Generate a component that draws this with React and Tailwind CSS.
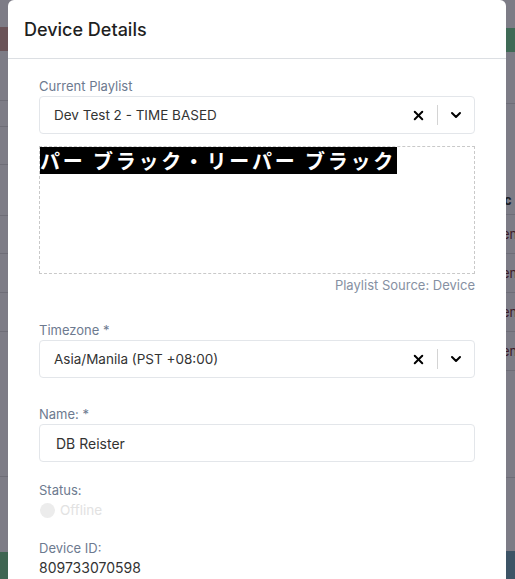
import React from 'react';
import { X, ChevronDown } from 'lucide-react';

const font = { fontFamily: 'Inter, "Noto Sans", sans-serif' };

function SelectBox({ value }) {
  return (
    <div className="flex h-[38px] items-center rounded border border-[#e3e6ea] bg-white pl-[14px] pr-[4px]">
      <span className="flex-1 text-[13.5px] text-[#333]">{value}</span>
      <X size={15} strokeWidth={3.2} className="mr-[11px] text-black" />
      <span className="h-[20px] w-px bg-[#d4d4d4]" />
      <ChevronDown size={16} strokeWidth={3} className="ml-[10px] mr-[6px] text-black" />
    </div>
  );
}

function Label({ children, className = '' }) {
  return (
    <div className={`h-[20px] text-[13px] leading-[20px] text-[#6d7a8f] ${className}`}>{children}</div>
  );
}

function Backdrop() {
  const tableRows = [0, 1, 2, 3];
  return (
    <div className="flex h-[579px] w-full bg-[#7d7c86]">
      {/* left sliver of the page */}
      <div className="flex w-[8px] flex-col">
        <div className="h-[27px]" />
        <div className="h-[24px] bg-[#6a5358]" />
        <div className="h-[50px] border-b border-[#6e6d77]" />
        <div className="h-[26px] border-b border-[#6e6d77]" />
        <div className="h-[38px] border-b border-[#6e6d77]" />
        <div className="h-[51px] border-b border-[#6e6d77]" />
        <div className="h-[38px] border-b border-[#6e6d77]" />
        <div className="h-[39px] border-b border-[#6e6d77]" />
        <div className="h-[39px] border-b border-[#6e6d77]" />
        <div className="h-[145px] border-b border-[#6e6d77]" />
        <div className="flex-1" />
        <div className="h-[27px] bg-[#3f6552]" />
      </div>
      <div className="flex-1" />
      {/* right sliver of the page */}
      <div className="flex w-[9px] flex-col overflow-hidden text-[13px] leading-none" style={font}>
        <div className="h-[28px]" />
        <div className="h-[24px] bg-[#3f6a56]" />
        <div className="h-[52px] border-b border-[#6e6d77]" />
        <div className="flex h-[111px] items-end border-b border-[#6e6d77] pb-[7px] font-bold text-[#1c1c24]">
          <span className="-ml-[2px]">c</span>
        </div>
        {tableRows.map((r) => (
          <div key={r} className="flex h-[39px] items-center border-b border-[#6e6d77] text-[#3d1a26]">
            <span className="-ml-[4px]">en</span>
          </div>
        ))}
        <div className="h-[107px] border-b border-[#6e6d77]" />
        <div className="flex-1" />
        <div className="h-[28px] bg-[#3d5466]" />
      </div>
    </div>
  );
}

export default function App() {
  return (
    <div className="relative h-[579px] w-[515px] overflow-hidden" style={font}>
      <Backdrop />

      {/* Device details modal */}
      <div className="absolute left-[8px] top-0 h-[600px] w-[498px] rounded-t-[6px] bg-white">
        <div className="flex h-[59px] items-center border-b border-[#dcdfe3] pl-[16px]">
          <h2 className="text-[18px] font-medium text-[#1f1f1f]">Device Details</h2>
        </div>

        <div className="px-[31px] pt-[17px]">
          <Label>Current Playlist</Label>
          <SelectBox value="Dev Test 2 - TIME BASED" />

          <div className="mt-[12px] h-[128px] border border-dashed border-[#c9c9c9]">
            <div
              className="inline-block h-[27px] bg-black pr-[1px] text-[20px] font-bold leading-[27px] tracking-[2.8px] text-white"
              style={{ fontFamily: '"Noto Sans CJK JP", sans-serif' }}
            >
              パー ブラック・リーパー ブラック
            </div>
          </div>
          <div className="h-[22px] text-right text-[13px] leading-[22px] text-[#8690a2]">
            Playlist Source: Device
          </div>

          <Label className="mt-[24px]">Timezone *</Label>
          <SelectBox value="Asia/Manila (PST +08:00)" />

          <Label className="mt-[26px]">Name: *</Label>
          <div className="flex h-[38px] items-center rounded border border-[#e3e6ea] pl-[16px] text-[14px] text-[#333]">
            DB Reister
          </div>

          <Label className="mt-[18px]">Status:</Label>
          <div className="flex h-[20px] items-center gap-[5px]">
            <span className="ml-px h-[15px] w-[15px] rounded-full bg-[#ececec]" />
            <span className="text-[13.5px] text-[#e2e2e2]">Offline</span>
          </div>

          <Label className="mt-[18px]">Device ID:</Label>
          <div className="h-[20px] text-[14px] leading-[20px] text-[#333]">809733070598</div>
        </div>
      </div>
    </div>
  );
}
